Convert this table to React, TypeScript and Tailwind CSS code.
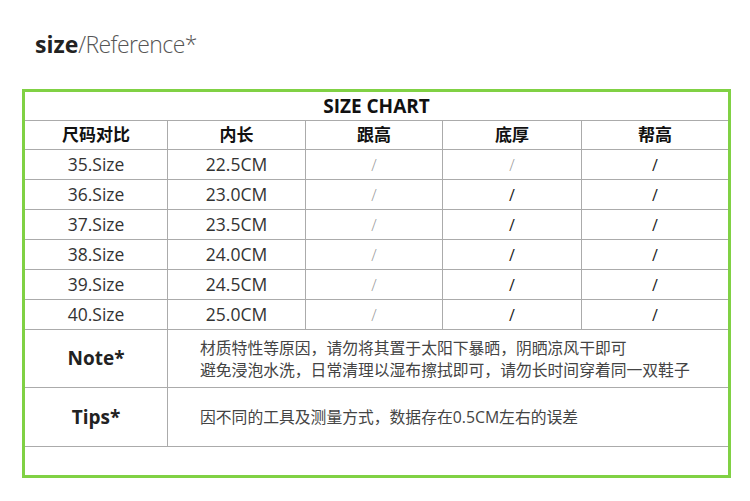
import React from "react";

const latin = { fontFamily: '"Open Sans", "Noto Sans CJK SC", sans-serif' };
const cjk = { fontFamily: '"Open Sans", "Noto Sans CJK SC", sans-serif' };

const rows: [string, string, boolean, boolean][] = [
  ["35.Size", "22.5CM", true, true],
  ["36.Size", "23.0CM", true, false],
  ["37.Size", "23.5CM", true, false],
  ["38.Size", "24.0CM", true, false],
  ["39.Size", "24.5CM", true, false],
  ["40.Size", "25.0CM", true, false],
];

function Slash({ light }: { light: boolean }) {
  return light ? (
    <span className="text-[16px] font-light text-[#9a9a9a]">/</span>
  ) : (
    <span className="text-[16px] text-[#222]">/</span>
  );
}

export default function App() {
  const cell = "border-r border-b border-[#ababab] flex items-center justify-center";
  const last = "border-b border-[#ababab] flex items-center justify-center";
  return (
    <div className="w-[750px] h-[501px] bg-white overflow-hidden" style={latin}>
      <div className="pl-[35px] pt-[28px] leading-[32px] text-[23px]">
        <span className="font-bold text-[#222]">size</span>
        <span className="font-light text-[#555] tracking-[-0.6px]">/Reference*</span>
      </div>
      <div className="ml-[22px] mt-[29px] w-[709px] h-[389px] border-[3px] border-[#80d144]">
        <div className="grid grid-cols-[143px_138px_137px_139px_146px] grid-rows-[29px_29px_30px_30px_30px_30px_30px_30px_58px_59px_28px]">
          <div className={`col-span-5 ${last} font-bold text-[19px] text-[#111] pt-[1px]`}>SIZE CHART</div>
          {["尺码对比", "内长", "跟高", "底厚", "帮高"].map((h, i) => (
            <div key={h} className={`${i === 4 ? last : cell} font-bold text-[17px] text-[#111]`} style={cjk}>
              {h}
            </div>
          ))}
          {rows.map(([s, l, a, b]) => (
            <React.Fragment key={s}>
              <div className={`${cell} text-[17.5px] text-[#333]`}>{s}</div>
              <div className={`${cell} text-[17.5px] text-[#333]`}>{l}</div>
              <div className={cell}><Slash light={a} /></div>
              <div className={cell}><Slash light={b} /></div>
              <div className={last}><Slash light={false} /></div>
            </React.Fragment>
          ))}
          <div className={`${cell} font-bold text-[19px] text-[#222]`}>Note*</div>
          <div className="col-span-4 border-b border-[#ababab] flex flex-col justify-center pl-[32px] text-[15.8px] leading-[22px] text-[#444]" style={cjk}>
            <div>材质特性等原因，请勿将其置于太阳下暴晒，阴晒凉风干即可</div>
            <div>避免浸泡水洗，日常清理以湿布擦拭即可，请勿长时间穿着同一双鞋子</div>
          </div>
          <div className={`${cell} font-bold text-[19px] text-[#222]`}>Tips*</div>
          <div className="col-span-4 border-b border-[#ababab] flex flex-col justify-center pl-[32px] text-[15.8px] leading-[22px] text-[#444]" style={cjk}>
            <div>因不同的工具及测量方式，数据存在0.5CM左右的误差</div>
          </div>
          <div className="col-span-5" />
        </div>
      </div>
    </div>
  );
}
